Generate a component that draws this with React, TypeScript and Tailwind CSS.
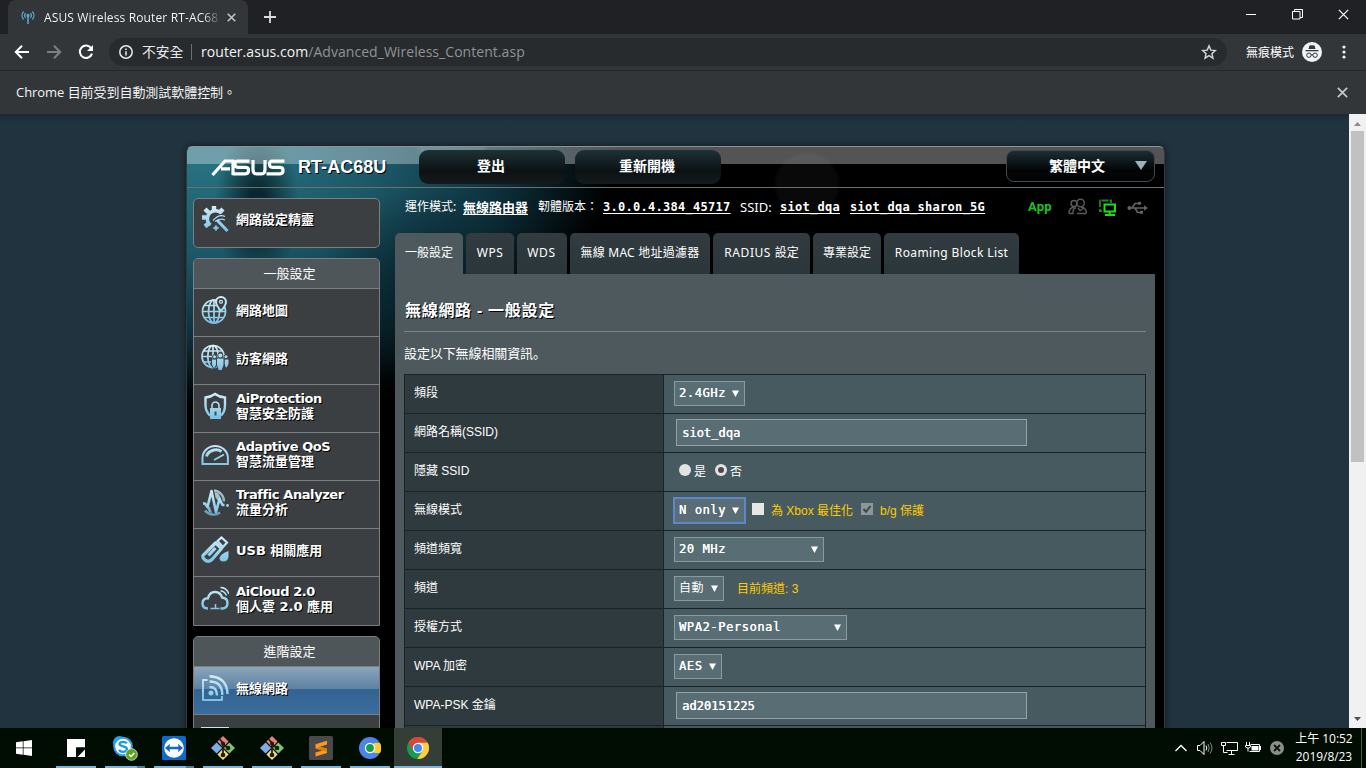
import React from "react";

const ui = "font-['Open_Sans','Noto_Sans_CJK_TC',sans-serif]";

const Cross = ({ s = 10, w = 1.6, c = "#c4c7ca" }: { s?: number; w?: number; c?: string }) => (
  <svg width={s} height={s} viewBox="0 0 10 10" stroke={c} strokeWidth={w} fill="none">
    <path d="M.8.8l8.4 8.4M9.2.8L.8 9.2" />
  </svg>
);

function TabStrip() {
  return (
    <div className="flex h-[34px] shrink-0 bg-[#202124]">
      <div className="ml-2 flex w-[240px] items-center rounded-t-lg bg-[#323639] pl-[13px]">
        <svg width="14" height="14" viewBox="0 0 14 14" fill="none" stroke="#5aa7c8" strokeWidth="1.3">
          <path d="M2.6 1.5a6 6 0 0 0 0 8M11.4 1.5a6 6 0 0 1 0 8M4.6 3.2a3.4 3.4 0 0 0 0 4.6M9.4 3.2a3.4 3.4 0 0 1 0 4.6" />
          <circle cx="7" cy="5.5" r="1" fill="#5aa7c8" />
          <path d="M7 6.5V14" strokeWidth="1.6" />
        </svg>
        <div className="ml-[9px] w-[176px] overflow-hidden whitespace-nowrap bg-gradient-to-r from-white from-90% to-[#4b4f52] bg-clip-text pt-px text-[12px] tracking-[0.14px] text-transparent">
          ASUS Wireless Router RT-AC68
        </div>
        <div className="ml-[7px]"><Cross s={9} w={1.7} /></div>
      </div>
      <svg className="ml-4 mt-[11px]" width="12" height="12" viewBox="0 0 12 12" stroke="#dadce0" strokeWidth="1.8"><path d="M6 0v12M0 6h12" /></svg>
      <div className="ml-auto flex items-center gap-[35.5px] pb-[6px] pr-[17px]">
        <svg width="10" height="10"><path d="M0 5.5h10" stroke="#fff" /></svg>
        <svg width="11" height="11" fill="none" stroke="#fff"><path d="M.5 2.5h7.5v7.5H.5zM2.5 2.5V.5h8v8H8" /></svg>
        <Cross s={11} w={1.1} c="#fff" />
      </div>
    </div>
  );
}

function Toolbar() {
  return (
    <div className="flex h-[37px] shrink-0 items-center border-b border-[#25282b] bg-[#323639]">
      <svg className="ml-[14px]" width="16" height="14" viewBox="0 0 16 14" fill="none" stroke="#fff" strokeWidth="2"><path d="M15 7H2M8 .8L1.8 7 8 13.2" /></svg>
      <svg className="ml-4" width="16" height="14" viewBox="0 0 16 14" fill="none" stroke="#7d8083" strokeWidth="2"><path d="M1 7h13M8 .8L14.2 7 8 13.2" /></svg>
      <svg className="ml-4" width="16" height="16" viewBox="0 0 16 16" fill="none" stroke="#fff" strokeWidth="2"><path d="M13.2 4.2A6.2 6.2 0 1 0 14 9.6" /><path d="M15 1v6H9z" fill="#fff" stroke="none" /></svg>
      <div className="ml-[15px] flex h-7 w-[1118px] items-center rounded-full bg-[#282b2e] pl-[10px] pr-[10px]">
        <svg width="14" height="14" viewBox="0 0 14 14" fill="none" stroke="#e8eaed" strokeWidth="1.5"><circle cx="7" cy="7" r="6.2" /><path d="M7 6.2v4.2M7 3.4v1.6" /></svg>
        <span className="ml-[9px] w-[42px] whitespace-nowrap text-[13.8px] leading-7 text-[#e8eaed]">不安全</span>
        <span className="ml-[7px] h-4 w-px bg-[#6b6e71]" />
        <span className="ml-[9px] whitespace-nowrap text-[14px] leading-7 tracking-[0.05px] text-[#8f9396]">
          <span className="text-[#f1f3f4]">router.asus.com</span>/Advanced_Wireless_Content.asp
        </span>
        <svg className="ml-auto" width="16" height="16" viewBox="0 0 24 24" fill="none" stroke="#d0d3d6" strokeWidth="2.2"><path d="M12 2.8l2.7 6.4 6.9.6-5.2 4.6 1.5 6.8L12 17.600l-5.900 3.600 1.500-6.800L2.400 9.800l6.900-.6z" /></svg>
      </div>
      <span className="ml-[19px] w-12 whitespace-nowrap pt-px text-[12px] text-white">無痕模式</span>
      <svg className="ml-2" width="20" height="20" viewBox="0 0 20 20">
        <circle cx="10" cy="10" r="10" fill="#f1f3f4" />
        <path d="M6.5 7l1-3.4 1.4-.4L10 3.6l1.1-.4 1.4.4 1 3.4zM3.5 8h13v1.2h-13z" fill="#323639" />
        <g fill="none" stroke="#323639" strokeWidth="1"><circle cx="6.9" cy="13.2" r="2.2" /><circle cx="13.1" cy="13.2" r="2.2" /><path d="M9 12.9q1-.6 2 0" /></g>
      </svg>
      <svg className="ml-5" width="4" height="14" fill="#f1f3f4"><circle cx="2" cy="2" r="1.6" /><circle cx="2" cy="7" r="1.6" /><circle cx="2" cy="12" r="1.6" /></svg>
    </div>
  );
}

const Grad = () => (
  <svg className="absolute h-0 w-0">
    <defs>
      <linearGradient id="ice" gradientUnits="userSpaceOnUse" x1="0" y1="0" x2="0" y2="28">
        <stop offset="0" stopColor="#d6f1fb" /><stop offset="1" stopColor="#76bfe4" />
      </linearGradient>
    </defs>
  </svg>
);

const I = ({ children }: { children: React.ReactNode }) => (
  <svg className="mb-[6px] shrink-0" width="28" height="28" viewBox="0 0 28 28" fill="none" stroke="url(#ice)" strokeWidth="1.7">{children}</svg>
);

const icons: Record<string, React.ReactNode> = {
  wizard: (
    <I>
      <path d="M20.500 8.500A8 8 0 1 0 9.500 20" strokeWidth="3.400" />
      <path d="M13 1v4.500M1 12.500h4.500M4 4l3.500 3.500M22 4l-3 3M4 21.500l3.500-3" strokeWidth="4.400" />
      <path d="M12 15.500q6-7 12-4M14 16.500q5-4 10-1.500" strokeWidth="1.300" />
      <path d="M16 15l10.500 11" strokeWidth="3.200" />
      <path d="M15 20l1 2 2 1-2 1-1 2-1-2-2-1 2-1z" fill="url(#ice)" strokeWidth=".5" />
    </I>
  ),
  map: <I><circle cx="13" cy="15.500" r="11.500" /><ellipse cx="13" cy="15.500" rx="5.500" ry="11.500" /><path d="M13 4v23M2 15.500h23M3.500 9.500H18M3.500 21.500h19" /><path d="M20 15q-5-6-5-9a5 5 0 0 1 10 0q0 3-5 9z" fill="#3b3f41" strokeWidth="2" /><circle cx="20" cy="5.800" r="1.500" strokeWidth="1.200" /></I>,
  guest: <I><circle cx="12" cy="12.500" r="11" /><ellipse cx="12" cy="12.500" rx="5.200" ry="11" /><path d="M12 1.500v22M1 12.500h22M2.500 7h19M2.500 18h9" /><g fill="url(#ice)" stroke="#3b3f41" strokeWidth="1"><path d="M10.500 15h5v6l-2 3.500h-1l-2-4zM23 15h5v5l-2 4h-1.500l-1.500-4z" /><circle cx="13.500" cy="12.800" r="2" /><circle cx="25" cy="12.800" r="2" /><path d="M15.500 14h7.500v7l-2 5.500h-3.500l-2-5.500z" /><circle cx="19.300" cy="11.500" r="2.600" /></g></I>,
  shield: <I><path d="M9 23.500C5.500 20.500 4.500 17 4.500 13V5.500Q10 5 14 2q4 3 10 3.500V13q0 7-4 10.500" strokeWidth="2.400" /><path d="M11 16v-2.500a3.500 3.500 0 0 1 7 0V16" /><path d="M9 16h11v11H9z" fill="url(#ice)" stroke="none" /><path d="M14.500 19.500v4" stroke="#36515e" strokeWidth="2" /></I>,
  gauge: <I><path d="M1.500 24v-6a12.700 12 0 0 1 25.400 0v6z" strokeWidth="2" /><path d="M5.500 16.500A9.500 8 0 0 1 20.500 11.500" strokeWidth="3" /><path d="M13 20l10-5.500" strokeWidth="1.700" /></I>,
  traffic: <I><path d="M13 2.500a11 11 0 0 1 10 11M4 22.500a11 11 0 0 0 15 2" strokeWidth="2.400" opacity=".75" /><path d="M13.500 4l4 1.500 3 6-3 2-3-4zM5 18l4 1 2 6-3-1z" fill="url(#ice)" stroke="none" opacity=".8" /><path d="M2 15.500h2L6.500 19 10.500 3l4.500 21 3.500-13 3 6h2" strokeWidth="2.600" strokeLinejoin="round" /><circle cx="26.500" cy="17.500" r="1.400" fill="url(#ice)" stroke="none" /></I>,
  usb: <I><path d="M3.500 18L14.500 7l6 5.500-9.500 11q-4 3.500-7.500 0t0-5.500zM7.500 19.500l7-7.500" strokeWidth="3.200" strokeLinejoin="round" /><path d="M16.500 5l4-3.500 5.500 5-4 4.500z" strokeWidth="2.200" /><path d="M27.500 15v6q-1 4.500-5 4.500t-4-3.500q1-4 9-7z" fill="url(#ice)" stroke="none" /></I>,
  cloud: <I><path d="M7 24.500q-5.500 0-5.500-5t5.500-5.200Q8.500 8 14 8t7 5.500q5.500.5 5.500 5.500t-5 5.500h-2" strokeWidth="2.400" /><path d="M9.500 24.500h9M14.500 20v4" strokeWidth="1.500" /><path d="M19.500 7q4 0 6 4.500M19.500 3.500q6 0 8.500 6.500" strokeWidth="1.500" /></I>,
  wifi: <I><path d="M6.500 6H2v20h19v-4" strokeWidth="1.900" /><circle cx="10" cy="19" r="2.500" fill="url(#ice)" stroke="none" /><path d="M8.500 13q7.500 0 7.500 8.500M8.500 7.500q12.800 0 12.800 13.500M8.500 2.200Q26 3 26.500 20" strokeWidth="2.500" /></I>,
  lan: <I><path d="M2 27V7h24v20" strokeWidth="4" /></I>,
};

const sh = "[text-shadow:1px_1px_0_#000]";

function MenuItem({ icon, lines, active, last }: { icon: string; lines: string[]; active?: boolean; last?: boolean }) {
  return (
    <div className={`flex h-12 shrink-0 items-center border-[#7a8082] pl-[7px] ${last ? "" : "border-b"} ${active ? "bg-[linear-gradient(#8ba5bb_0%,#5f81a2_46%,#33638f_48%,#3a6c9f_100%)]" : ""}`}>
      {icons[icon]}
      <div className={`ml-[7px] pb-[5px] whitespace-nowrap text-[13px] font-bold leading-[15px] text-white ${sh}`}>
        {lines.map((l) => <div key={l} className={/^[A-Z][\w .]+$/.test(l) ? "tracking-[-0.42px]" : ""}>{l}</div>)}
      </div>
    </div>
  );
}

function Group({ title, children, cls }: { title: string; children: React.ReactNode; cls: string }) {
  return (
    <div className={`mt-[10px] shrink-0 overflow-hidden rounded-t-[5px] border border-[#7a8082] bg-[#3b3f41] ${cls}`}>
      <div className="h-[30px] border-b border-[#7a8082] bg-[#4f565a] pl-[6px] text-center text-[13px] leading-[29px] text-white">{title}</div>
      {children}
    </div>
  );
}

function Sidebar() {
  return (
    <div className="flex w-[187px] shrink-0 flex-col pt-[10px] font-['DejaVu_Sans','Noto_Sans_CJK_TC',sans-serif]">
      <div className="h-[50px] shrink-0 rounded-[5px] border border-[#7a8082] bg-[#3b3f41]"><div className="-mt-px"><MenuItem icon="wizard" lines={["網路設定精靈"]} last /></div></div>
      <Group title="一般設定" cls="h-[368px]">
        <MenuItem icon="map" lines={["網路地圖"]} />
        <MenuItem icon="guest" lines={["訪客網路"]} />
        <MenuItem icon="shield" lines={["AiProtection", "智慧安全防護"]} />
        <MenuItem icon="gauge" lines={["Adaptive QoS", "智慧流量管理"]} />
        <MenuItem icon="traffic" lines={["Traffic Analyzer", "流量分析"]} />
        <MenuItem icon="usb" lines={["USB 相關應用"]} />
        <MenuItem icon="cloud" lines={["AiCloud 2.0", "個人雲 2.0 應用"]} last />
      </Group>
      <Group title="進階設定" cls="h-[130px]">
        <MenuItem icon="wifi" lines={["無線網路"]} active />
        <MenuItem icon="lan" lines={[]} />
      </Group>
    </div>
  );
}

function Header() {
  const btn = "flex h-[34px] w-[146px] items-center justify-center rounded-[9px] bg-[linear-gradient(#1d3236,#0c1214_60%,#151a1b)] pb-[4px] pr-[2px] text-[14px] font-bold text-white";
  return (
    <div className="flex h-[41px] shrink-0 items-start border-b border-[#6b7072] pt-[3px]">
      <svg className="ml-[24px] mt-[9px]" width="74" height="17" viewBox="0 0 74 17" fill="none" stroke="#fff" strokeWidth="3.200">
        <path d="M1.500 16L14 2h8v14M10 9.800h9M38.500 2.200h-12q-2.600 0-2.500 3t3 3.200h8q2.600.2 2.500 3.200t-3 3.200H21.500M42 1v9.500q0 4.300 3.500 4.300h5q3.500 0 3.500-4.300V1M73.500 2.200h-12.500q-2.600 0-2.500 3t3 3.200h8q2.600.2 2.500 3.200t-3 3.200H55.500" />
      </svg>
      <span className={`ml-[13px] mt-[3px] w-[121px] whitespace-nowrap font-['Liberation_Sans',sans-serif] text-[18px] font-bold leading-7 tracking-[0.05px] text-white ${sh}`}>RT-AC68U</span>
      <div className={btn}>登出</div>
      <div className={`${btn} ml-[10px]`}>重新開機</div>
      <div className="ml-auto mr-[9px] flex h-[32px] w-[149px] items-center rounded-[8px] border border-[#43494b] bg-[linear-gradient(#1b2f36,#020405_65%)] pb-px pl-[42px] text-[14px] font-bold text-white">
        <span>繁體中文</span>
        <svg className="ml-auto mr-[7px]" width="12" height="9"><path d="M0 0h12L6 9z" fill="#9db2bb" /></svg>
      </div>
    </div>
  );
}

function StatusRow() {
  const lk = "font-['DejaVu_Sans_Mono','Noto_Sans_CJK_TC',monospace] text-[12px] font-bold underline underline-offset-2 tracking-[0.28px]";
  return (
    <div className="flex h-[45px] items-start pl-[10px] pt-[9px] font-['Noto_Sans','Noto_Sans_CJK_TC',sans-serif] text-[12px] leading-[20px] whitespace-nowrap text-white">
      <span className="w-[58px]">運作模式:</span>
      <span className="w-[75px] text-[13px] font-bold underline underline-offset-2">無線路由器</span>
      <span className="w-[65px]">韌體版本：</span>
      <span className={`w-[137px] ${lk}`}>3.0.0.4.384_45717</span>
      <span className="w-[40px] text-[13px]">SSID:</span>
      <span className={`w-[70px] ${lk}`}>siot_dqa</span>
      <span className={`w-[178px] ${lk}`}>siot_dqa_sharon_5G</span>
      <span className="w-[40px] font-['Roboto',sans-serif] text-[13px] font-bold tracking-[0.2px] text-[#17c717]">App</span>
      <svg className="mt-px" width="20" height="17" viewBox="0 0 20 17" fill="none" stroke="#5a5a5a" strokeWidth="1.400"><circle cx="12.500" cy="5" r="3.800" /><circle cx="6" cy="5.500" r="3" /><path d="M1 15.500q0-6 5-6.300M8 9.500Q4.500 11 5 15.500H1M13 9q5 .5 5.500 6M9 15.500h9.500M10 10l2 2.500 4-2.500" /></svg>
      <svg className="ml-[11px] mt-[2px]" width="17" height="18" viewBox="0 0 17 18" fill="none" stroke="#1fdc1f"><path d="M1 8V1.500h11V4" strokeWidth="1.800" strokeDasharray="7 1" opacity=".65" /><path d="M1 10v2h2" strokeWidth="1.800" opacity=".65" /><path d="M5.500 5.500h10.500v7h-10.500z" strokeWidth="2" /><path d="M6 16h10M10.700 13v3" strokeWidth="2" /></svg>
      <svg className="ml-[11px] mt-[4px]" width="21" height="14" viewBox="0 0 21 14" fill="none" stroke="#5f6466" strokeWidth="1.600"><path d="M2 7h16M5 7l3-4.500h3M8 7l2.500 4.500H14" /><circle cx="2.400" cy="7" r="2" fill="#5f6466" stroke="none" /><path d="M17 4.300v5.400L21 7z" fill="#5f6466" stroke="none" /><circle cx="12.500" cy="2.300" r="1.700" fill="#5f6466" stroke="none" /><path d="M13 9.800h3v3h-3z" fill="#5f6466" stroke="none" /></svg>
    </div>
  );
}

function Tabs() {
  const t = "flex h-[41px] items-center justify-center rounded-t-[5px] pb-[2px] whitespace-nowrap";
  const d = "bg-[linear-gradient(#323c40,#2b363a)]";
  return (
    <div className="flex gap-[3px] font-['Noto_Sans','Noto_Sans_CJK_TC',sans-serif] text-[12px] text-white">
      <div className={`${t} w-[68px] bg-[#4d595d]`}>一般設定</div>
      <div className={`${t} ${d} w-[48px] tracking-[0.5px]`}>WPS</div>
      <div className={`${t} ${d} w-[50px] pr-px tracking-[0.6px]`}>WDS</div>
      <div className={`${t} ${d} w-[140px]`}><span className="tracking-[0.25px]">無線 MAC 地址過濾器</span></div>
      <div className={`${t} ${d} w-[97px]`}><span><span className="tracking-[0.55px]">RADIUS </span> 設定</span></div>
      <div className={`${t} ${d} w-[68px]`}>專業設定</div>
      <div className={`${t} ${d} w-[135px] tracking-[0.38px]`}>Roaming Block List</div>
    </div>
  );
}

function Select({ value, w, focus, bold = true }: { value: string; w: string; focus?: boolean; bold?: boolean }) {
  return (
    <div className={`flex items-center justify-between border bg-[#596e74] pb-px pl-1 pr-[5px] font-['DejaVu_Sans_Mono','Noto_Sans_CJK_TC',monospace] text-[12px] tracking-[0.6px] text-white ${w} ${bold ? "[text-shadow:0.3px_0_0_#fff]" : ""} ${focus ? "-ml-px h-[27px] border-2 border-[#5d86cf]" : "h-[25px] border-[#8b9a9e]"}`}>
      <span className="whitespace-pre">{value}</span>
      <svg width="7" height="7"><path d="M0 .5h7L3.500 7z" fill="#fff" /></svg>
    </div>
  );
}

const Input = ({ value }: { value: string }) => (
  <div className="ml-[2px] flex h-[27px] w-[351px] items-center border border-[#96a3a6] bg-[#596e74] pl-[5px] font-['DejaVu_Sans_Mono',monospace] text-[12px] tracking-[0.05px] text-white [text-shadow:0.4px_0_0_#fff]">{value}</div>
);

const Radio = ({ on }: { on?: boolean }) => (
  <span className="flex h-3 w-3 items-center justify-center rounded-full bg-[#e2e2e2]">{on && <span className="h-[6px] w-[6px] rounded-full bg-[#4a4a4a]" />}</span>
);

function Row({ label, children }: { label: string; children?: React.ReactNode }) {
  return (
    <div className="flex h-[39px] shrink-0 border-b border-[#182428]">
      <div className="w-[259px] border-r border-[#182428] bg-[#2f3a3e] pl-[9px] leading-[37px]">{label}</div>
      <div className="flex flex-1 items-center bg-[#475a5f] pb-px pl-[10px]">{children}</div>
    </div>
  );
}

function Settings() {
  return (
    <div className="flex flex-1 flex-col bg-[#4d595d] pl-[9px] pr-[9px] text-white">
      <div className="h-[58px] border-b border-[#7a8588] pl-px pt-[25px] font-['Liberation_Sans','Noto_Sans_CJK_TC',sans-serif] text-[16px] font-bold leading-[24px] tracking-[0.7px] whitespace-nowrap [text-shadow:1px_1px_0_#000]">無線網路 - 一般設定</div>
      <div className="h-[42px] pt-[11px] text-[13px] leading-5 tracking-[-0.1px]">設定以下無線相關資訊<span className="font-['Noto_Sans_CJK_JP',sans-serif]">。</span></div>
      <div className="flex h-[400px] flex-col border border-[#182428] font-['Liberation_Sans','Noto_Sans_CJK_TC',sans-serif] text-[12px]">
        <Row label="頻段"><Select value="2.4GHz" w="w-[71px]" /></Row>
        <Row label="網路名稱(SSID)"><Input value="siot_dqa" /></Row>
        <Row label="隱藏 SSID">
          <div className="flex items-center pl-[5px]">
            <span className="-mt-1"><Radio /></span><span className="ml-[3px] w-[21px]">是</span>
            <span className="-mt-1"><Radio on /></span><span className="ml-[3px]">否</span>
          </div>
        </Row>
        <Row label="無線模式">
          <Select value="N only" w="w-[73px]" focus />
          <span className="mb-[4px] ml-[6px] h-3 w-3 bg-[#e6e6e6]" />
          <span className="ml-[7px] w-[90px] whitespace-nowrap text-[#fc0]">為 Xbox 最佳化</span>
          <svg className="mb-[4px]" width="12" height="12"><path d="M0 0h12v12H0z" fill="#8d9699" /><path d="M2.500 6l2.500 2.800L9.500 3" fill="none" stroke="#39474b" strokeWidth="2" /></svg>
          <span className="ml-[7px] whitespace-nowrap text-[#fc0]">b/g 保護</span>
        </Row>
        <Row label="頻道頻寬"><Select value="20 MHz" w="w-[150px]" /></Row>
        <Row label="頻道"><Select value="自動" w="w-[50px]" bold={false} /><span className="ml-[13px] text-[#fc0]">目前頻道: 3</span></Row>
        <Row label="授權方式"><Select value="WPA2-Personal" w="w-[173px]" /></Row>
        <Row label="WPA 加密"><Select value="AES" w="w-[48px]" /></Row>
        <Row label="WPA-PSK 金鑰"><Input value="ad20151225" /></Row>
        <Row label="" />
      </div>
    </div>
  );
}

function Page() {
  return (
    <div className="flex min-h-0 flex-1 overflow-hidden bg-[linear-gradient(#1b2a34,#21333e_8px)]">
      <div className="ml-[186px] mt-8 flex h-[640px] w-[979px] flex-col overflow-hidden rounded-t-[6px] border-x border-t border-x-[#33393b] border-t-[#8b9495] bg-black bg-[linear-gradient(rgba(255,255,255,0.33),rgba(255,255,255,0.33)),radial-gradient(ellipse_42px_80px_at_70px_60px,rgba(4,22,28,0.8)_20%,transparent),radial-gradient(circle_110px_at_240px_150px,rgba(5,30,36,0.7)_10%,transparent),radial-gradient(circle_34px_at_620px_38px,rgba(255,255,255,0.035)_88%,transparent),radial-gradient(circle_40px_at_265px_-16px,rgba(255,255,255,0.1)_88%,transparent),radial-gradient(ellipse_410px_270px_at_20px_-10px,#277281_10%,#1c5666_45%,#0c2e39_75%,transparent_100%)] bg-[length:100%_17px,100%_100%,100%_100%,100%_100%,100%_100%,100%_100%] bg-no-repeat shadow-[0_0_6px_#10181d]">
        <Header />
        <div className="flex min-h-0 flex-1 pl-[6px]">
          <Sidebar />
          <div className="ml-[15px] flex w-[760px] flex-col">
            <StatusRow />
            <Tabs />
            <Settings />
          </div>
        </div>
      </div>
      <div className="ml-auto flex w-[17px] flex-col items-center bg-[#f1f1f1]">
        <svg className="mt-2 mb-[5px] shrink-0" width="7" height="4"><path d="M0 4h7L3.500 0z" fill="#8a8a8a" /></svg>
        <div className="h-[331px] w-[13px] shrink-0 bg-[#c1c1c1]" />
        <svg className="mt-auto mb-[7px] shrink-0" width="7" height="4"><path d="M0 0h7L3.500 4z" fill="#505050" /></svg>
      </div>
    </div>
  );
}

const Git = () => (
  <svg width="24" height="24" viewBox="0 0 24 24">
    <path d="M12 0l5.600 5.600L12 11.200 6.400 5.600z" fill="#e8807a" /><path d="M0 12l5.600-5.600 5.600 5.600-5.600 5.600z" fill="#7fabe8" /><path d="M12.800 12l5.600-5.600L24 12l-5.600 5.600z" fill="#7fc56e" /><path d="M6.400 18.400L12 12.800l5.600 5.600L12 24z" fill="#f3dc7c" />
    <g stroke="#1d1d14" strokeWidth="1.700" fill="#1d1d14"><path d="M8.500 3l3.500 4v13M12 8l5 4" fill="none" /><circle cx="12" cy="7.500" r="1.200" /><circle cx="17" cy="12" r="1.500" /><circle cx="12" cy="19" r="1.500" /></g>
  </svg>
);

const apps: React.ReactNode[] = [
  <svg width="18" height="18" viewBox="0 0 18 18"><path d="M0 0h18v8.500H9.500V18H0z" fill="#fff" /><path d="M18 10v8h-7.500z" fill="#010d03" /><path d="M18 10.500L10.500 18H9V8.500h9z" fill="#010d03" /><path d="M18 10.500V18h-7.500z" fill="#fff" /></svg>,
  <svg width="26" height="26" viewBox="0 0 26 26"><circle cx="7.500" cy="7.500" r="6.500" fill="#24a5e8" /><circle cx="11" cy="11.500" r="9.800" fill="#24a5e8" /><circle cx="14" cy="15" r="6.500" fill="#24a5e8" /><circle cx="11" cy="11.500" r="7.800" fill="#fff" /><path d="M14.800 8.200Q13.500 6.800 11 6.800q-3.500.2-3.500 2.300 0 1.600 3.500 2.200 4 .7 4 2.900-.2 2.600-4 2.600-2.800 0-4-2" fill="none" stroke="#1c9ade" strokeWidth="2.300" /><circle cx="19.500" cy="19.500" r="5.800" fill="#5da51c" stroke="#e6f0dc" strokeWidth=".8" /><path d="M17 19.500l2 2 3.300-3.600" fill="none" stroke="#fff" strokeWidth="1.500" /></svg>,
  <svg width="24" height="24" viewBox="0 0 24 24"><rect width="24" height="24" rx="1.500" fill="#1169c7" /><circle cx="12" cy="12" r="9.800" fill="#fff" /><path d="M3 12l5-4.200-.5 3h9l-.5-3 5 4.200-5 4.200.5-3h-9l.5 3z" fill="#1169c7" /></svg>,
  <Git />,
  <Git />,
  <svg width="24" height="24" viewBox="0 0 24 24"><rect width="24" height="24" rx="1.500" fill="#494949" /><path d="M18 4.800L6.500 8.300v4.200l7 2-7 2.100v3.900L18 17v-4.300l-7-2 7-2.100z" fill="#ff9a18" /><path d="M6.500 12.500l11.500 3.200v-3l-7-2z" fill="#e07f0a" /></svg>,
  <svg width="22" height="22" viewBox="0 0 22 22"><circle cx="11" cy="11" r="11" fill="#4a86ea" /><path d="M11 11l4-5h6q2.500 5 0 10h-6z" fill="#fc3" /><circle cx="11" cy="11" r="5.200" fill="#fff" /><circle cx="11" cy="11" r="3.900" fill="#1f9a4d" /></svg>,
  <svg width="22" height="22" viewBox="0 0 22 22"><circle cx="11" cy="11" r="11" fill="#189c50" /><path d="M20.500 5.500H11l4.700 8-5.400 8.500a11 11 0 0 0 10.200-16.500z" fill="#ffcd40" /><path d="M1.500 5.500a11 11 0 0 1 19 0H11L6.200 13.800z" fill="#e0453a" /><circle cx="11" cy="11" r="5.200" fill="#fff" /><circle cx="11" cy="11" r="4" fill="#4587f3" /></svg>,
];

function Taskbar() {
  return (
    <div className="flex h-10 shrink-0 items-center bg-[#010d03] text-white">
      <svg className="ml-4 mr-[19px]" width="16" height="16" viewBox="0 0 16 16" fill="#fff"><path d="M0 2.300l6.800-1v6.300H0zM7.500 1.200L16 0v7.600H7.500zM0 8.300h6.800v6.400L0 13.700zM7.500 8.300H16V16l-8.500-1.200z" /></svg>
      {apps.map((a, i) => (
        <div key={i} className={`flex h-10 shrink-0 flex-col items-center justify-between ${i === 7 ? "w-12 bg-[#343e37]" : "w-[49px]"}`}>
          <div className="flex h-[38px] items-center pt-[2px]">{a}</div>
          <div className={`flex h-[2px] ${i === 7 ? "w-12" : "w-10"} bg-[#76b4e6]`}>{(i === 1 || i === 2) && <span className="ml-auto w-2 bg-[#4d7ba3]" />}</div>
        </div>
      ))}
      <div className="ml-auto flex items-center">
        <svg width="12" height="8" fill="none" stroke="#fff" strokeWidth="1.300"><path d="M.5 7L6 1.500 11.500 7" /></svg>
        <svg className="ml-[10px]" width="16" height="14" fill="none" stroke="#fff"><path d="M.5 4.500H3l4-4v13l-4-4H.5zM9 4.500q1.500 2.500 0 5" /><path d="M11 3q2.500 4 0 8M13 1.500q4 5.500 0 11" stroke="#858b86" /></svg>
        <svg className="ml-[8px]" width="17" height="15" fill="none" stroke="#fff"><path d="M5.500 1.500h11v8h-11M7.500 13.500h6M10.500 10v3M.5 1.500h4v3h-4zM2.500 5v6.500h4" /></svg>
        <svg className="ml-[7px]" width="17" height="12" fill="none" stroke="#fff"><path d="M5.500 2.500h9v7H4.500M15.500 4v4M1.500 0v3M4.500 0v3M.5 3.500h5v1.500l-1.500 1h-2l-1.500-1zM3 6v3.500" /><path d="M6.500 4h7v4.500h-7z" fill="#fff" stroke="none" /></svg>
        <svg className="ml-[8px]" width="14" height="14"><circle cx="7" cy="7" r="7" fill="#8b8e8b" /><path d="M4 4l6 6M10 4l-6 6" stroke="#101610" strokeWidth="1.800" /></svg>
        <div className="ml-[9px] w-[62px] whitespace-nowrap text-center text-[12px] leading-[18px] tracking-[-0.05px]">
          <div>上午 10:52</div>
          <div>2019/8/23</div>
        </div>
        <div className="ml-[6px] h-10 w-px bg-[#4f5850]" /><div className="w-[4px]" />
      </div>
    </div>
  );
}

export default function App() {
  return (
    <div className={`relative flex h-[768px] w-[1366px] flex-col overflow-hidden bg-[#323639] ${ui}`}>
      <Grad />
      <TabStrip />
      <Toolbar />
      <div className="flex h-[43px] shrink-0 items-center justify-between bg-[#323639] pl-4 pr-[18px] text-[13px] text-[#f1f3f4]">
        <span className="tracking-[-0.05px]">Chrome 目前受到自動測試軟體控制。</span>
        <Cross s={11} />
      </div>
      <Page />
      <Taskbar />
    </div>
  );
}
